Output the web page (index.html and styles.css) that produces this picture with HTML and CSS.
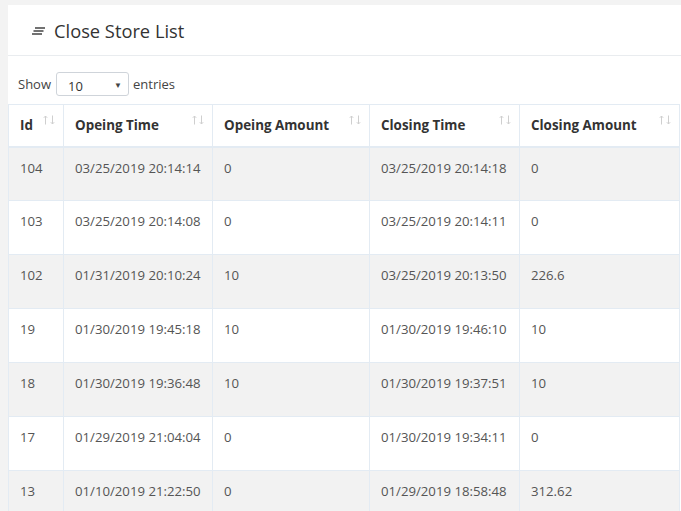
FILE: index.html
```html
<!DOCTYPE html>
<html>
<head>
<meta charset="utf-8">
<link rel="stylesheet" href="styles.css">
</head>
<body>
<div class="card">
  <div class="card-header">
    <svg class="title-icon" width="14" height="8" viewBox="0 0 14 8"><path d="M3 1H13M1.5 4H11.5M0 7H10" stroke="#444" stroke-width="1.3" fill="none"/></svg>
    <h4 class="card-title">Close Store List</h4>
  </div>
  <div class="card-body">
    <div class="length">
      <span>Show</span>
      <div class="select"><span>10</span><span class="caret">▼</span></div>
      <span>entries</span>
    </div>
    <table class="table">
      <thead>
        <tr>
          <th class="c1">Id<svg class="sort" width="12" height="10" viewBox="0 0 12 10"><path d="M2.5 9.5V1M0.8 2.8L2.5 1L4.2 2.8M9.5 0.5V9M7.8 7.2L9.5 9L11.2 7.2" stroke="#cfcfcf" fill="none"/></svg></th>
          <th class="c2">Opeing Time<svg class="sort" width="12" height="10" viewBox="0 0 12 10"><path d="M2.5 9.5V1M0.8 2.8L2.5 1L4.2 2.8M9.5 0.5V9M7.8 7.2L9.5 9L11.2 7.2" stroke="#cfcfcf" fill="none"/></svg></th>
          <th class="c3">Opeing Amount<svg class="sort" width="12" height="10" viewBox="0 0 12 10"><path d="M2.5 9.5V1M0.8 2.8L2.5 1L4.2 2.8M9.5 0.5V9M7.8 7.2L9.5 9L11.2 7.2" stroke="#cfcfcf" fill="none"/></svg></th>
          <th class="c4">Closing Time<svg class="sort" width="12" height="10" viewBox="0 0 12 10"><path d="M2.5 9.5V1M0.8 2.8L2.5 1L4.2 2.8M9.5 0.5V9M7.8 7.2L9.5 9L11.2 7.2" stroke="#cfcfcf" fill="none"/></svg></th>
          <th class="c5">Closing Amount<svg class="sort" width="12" height="10" viewBox="0 0 12 10"><path d="M2.5 9.5V1M0.8 2.8L2.5 1L4.2 2.8M9.5 0.5V9M7.8 7.2L9.5 9L11.2 7.2" stroke="#cfcfcf" fill="none"/></svg></th>
        </tr>
      </thead>
      <tbody>
        <tr class="odd"><td>104</td><td>03/25/2019 20:14:14</td><td>0</td><td>03/25/2019 20:14:18</td><td>0</td></tr>
        <tr><td>103</td><td>03/25/2019 20:14:08</td><td>0</td><td>03/25/2019 20:14:11</td><td>0</td></tr>
        <tr class="odd"><td>102</td><td>01/31/2019 20:10:24</td><td>10</td><td>03/25/2019 20:13:50</td><td>226.6</td></tr>
        <tr><td>19</td><td>01/30/2019 19:45:18</td><td>10</td><td>01/30/2019 19:46:10</td><td>10</td></tr>
        <tr class="odd"><td>18</td><td>01/30/2019 19:36:48</td><td>10</td><td>01/30/2019 19:37:51</td><td>10</td></tr>
        <tr><td>17</td><td>01/29/2019 21:04:04</td><td>0</td><td>01/30/2019 19:34:11</td><td>0</td></tr>
        <tr class="odd"><td>13</td><td>01/10/2019 21:22:50</td><td>0</td><td>01/29/2019 18:58:48</td><td>312.62</td></tr>
      </tbody>
    </table>
  </div>
</div>
</body>
</html>
```
FILE: styles.css
```css
html, body { margin: 0; padding: 0; }
body {
  background: #f3f3f3;
  font-family: "Open Sans", "Noto Sans", sans-serif;
  color: #555;
  overflow: hidden;
  width: 681px;
  height: 511px;
}
.card {
  margin: 5px 0 0 8px;
  background: #fff;
  width: 673px;
}
.card-header {
  height: 50px;
  display: flex;
  align-items: center;
  padding-left: 24px;
  border-bottom: 1px solid #e9ecef;
}
.title-icon { margin-right: 8px; margin-top: 1px; }
.card-title {
  margin: 0;
  font-size: 18.3px;
  font-weight: 500;
  color: #333;
}
.card-body { padding-top: 14px; }
.length {
  display: flex;
  align-items: center;
  font-size: 13px;
  color: #444;
  padding-left: 10px;
  height: 28px;
}
.select {
  width: 73px;
  height: 24px;
  border: 1px solid #cfd4da;
  border-radius: 3px;
  margin: 0 4px 0 5px;
  display: flex;
  align-items: center;
  justify-content: space-between;
  padding: 0 6px 0 11px;
  box-sizing: border-box;
  font-size: 13px;
  color: #333;
}
.select span:first-child { margin-top: 3px; }
.caret { font-size: 8px; color: #444; }
.table {
  margin-top: 6px;
  border-collapse: collapse;
  font-size: 13.2px;
}
.table th, .table td {
  border: 1px solid #e3ebf3;
  text-align: left;
}
.table th {
  height: 42px;
  padding: 0 11px;
  font-weight: 700;
  font-size: 13.4px;
  color: #333;
  position: relative;
  border-bottom: 2px solid #e3ebf3;
  box-sizing: border-box;
}
.sort {
  position: absolute;
  right: 8px;
  top: 10px;
}
.table td {
  height: 54px;
  padding: 11px 11px 0;
  vertical-align: top;
  box-sizing: border-box;
  color: #555;
}
.table tr.odd td { background: #f2f2f2; }
.c1 { width: 55px; }
.c2 { width: 149px; }
.c3 { width: 157px; }
.c4 { width: 150px; }
.c5 { width: 160px; }
```
